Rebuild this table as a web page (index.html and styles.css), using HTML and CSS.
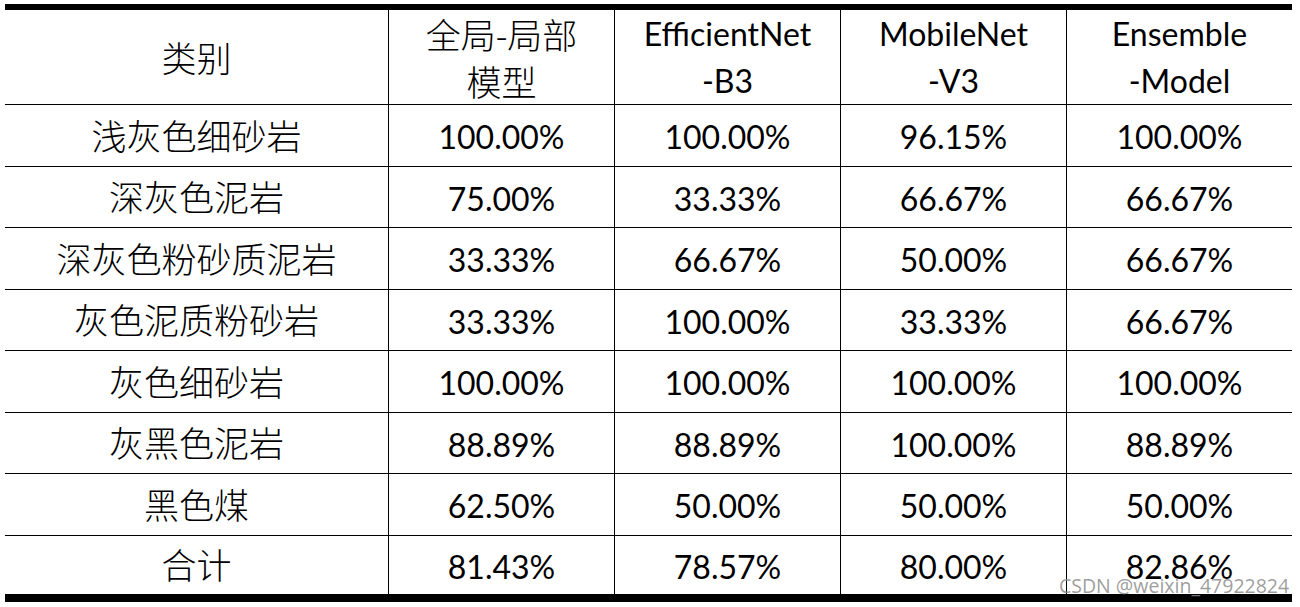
FILE: index.html
```html
<!DOCTYPE html>
<html lang="zh">
<head>
<meta charset="utf-8">
<title>分类准确率</title>
<link rel="stylesheet" href="styles.css">
</head>
<body>
<div class="page">
  <div class="table">
    <div class="cell head zh">类别</div>
    <div class="cell head zh">全局-局部<br>模型</div>
    <div class="cell head">EfficientNet<br>-B3</div>
    <div class="cell head">MobileNet<br>-V3</div>
    <div class="cell head last-col">Ensemble<br>-Model</div>

    <div class="cell zh">浅灰色细砂岩</div>
    <div class="cell">100.00%</div>
    <div class="cell">100.00%</div>
    <div class="cell">96.15%</div>
    <div class="cell last-col">100.00%</div>

    <div class="cell zh">深灰色泥岩</div>
    <div class="cell">75.00%</div>
    <div class="cell">33.33%</div>
    <div class="cell">66.67%</div>
    <div class="cell last-col">66.67%</div>

    <div class="cell zh">深灰色粉砂质泥岩</div>
    <div class="cell">33.33%</div>
    <div class="cell">66.67%</div>
    <div class="cell">50.00%</div>
    <div class="cell last-col">66.67%</div>

    <div class="cell zh">灰色泥质粉砂岩</div>
    <div class="cell">33.33%</div>
    <div class="cell">100.00%</div>
    <div class="cell">33.33%</div>
    <div class="cell last-col">66.67%</div>

    <div class="cell zh">灰色细砂岩</div>
    <div class="cell">100.00%</div>
    <div class="cell">100.00%</div>
    <div class="cell">100.00%</div>
    <div class="cell last-col">100.00%</div>

    <div class="cell zh">灰黑色泥岩</div>
    <div class="cell">88.89%</div>
    <div class="cell">88.89%</div>
    <div class="cell">100.00%</div>
    <div class="cell last-col">88.89%</div>

    <div class="cell zh">黑色煤</div>
    <div class="cell">62.50%</div>
    <div class="cell">50.00%</div>
    <div class="cell">50.00%</div>
    <div class="cell last-col">50.00%</div>

    <div class="cell zh last-row">合计</div>
    <div class="cell last-row">81.43%</div>
    <div class="cell last-row">78.57%</div>
    <div class="cell last-row">80.00%</div>
    <div class="cell last-row last-col">82.86%</div>
  </div>
  <div class="watermark">CSDN @weixin_47922824</div>
</div>
</body>
</html>
```

FILE: styles.css
```css
html, body {
  margin: 0;
  padding: 0;
  background: #ffffff;
}

.page {
  position: relative;
  width: 1300px;
  height: 607px;
  padding: 4px 0 0 5px;
  box-sizing: border-box;
}

.table {
  display: grid;
  width: 1287px;
  grid-template-columns: 384px 226px 226px 226px 225px;
  grid-template-rows: 95px 62px 61px 62px 61px 62px 61px 62px 58px;
  border-top: 6px solid #000;
  border-bottom: 8px solid #000;
  color: #000;
  font-family: "Lato", "Noto Sans CJK SC", sans-serif;
  font-size: 32px;
}

.cell {
  box-sizing: border-box;
  border-right: 1px solid #000;
  border-bottom: 1px solid #000;
  display: flex;
  align-items: center;
  justify-content: center;
  text-align: center;
  line-height: 47px;
  padding-top: 2px;
}

.head {
  padding-top: 0;
}

.zh {
  font-family: "Noto Sans CJK SC", sans-serif;
  font-size: 35px;
  font-weight: 300;
  padding-top: 0;
  padding-bottom: 3px;
}

.head.zh {
  padding-bottom: 1px;
}

.last-col {
  border-right: none;
}

.last-row {
  border-bottom: none;
}

.watermark {
  position: absolute;
  left: 1059px;
  top: 574px;
  font-family: "Open Sans", sans-serif;
  font-size: 19.5px;
  line-height: 24px;
  color: rgba(140, 140, 140, 0.85);
  white-space: nowrap;
}
```
